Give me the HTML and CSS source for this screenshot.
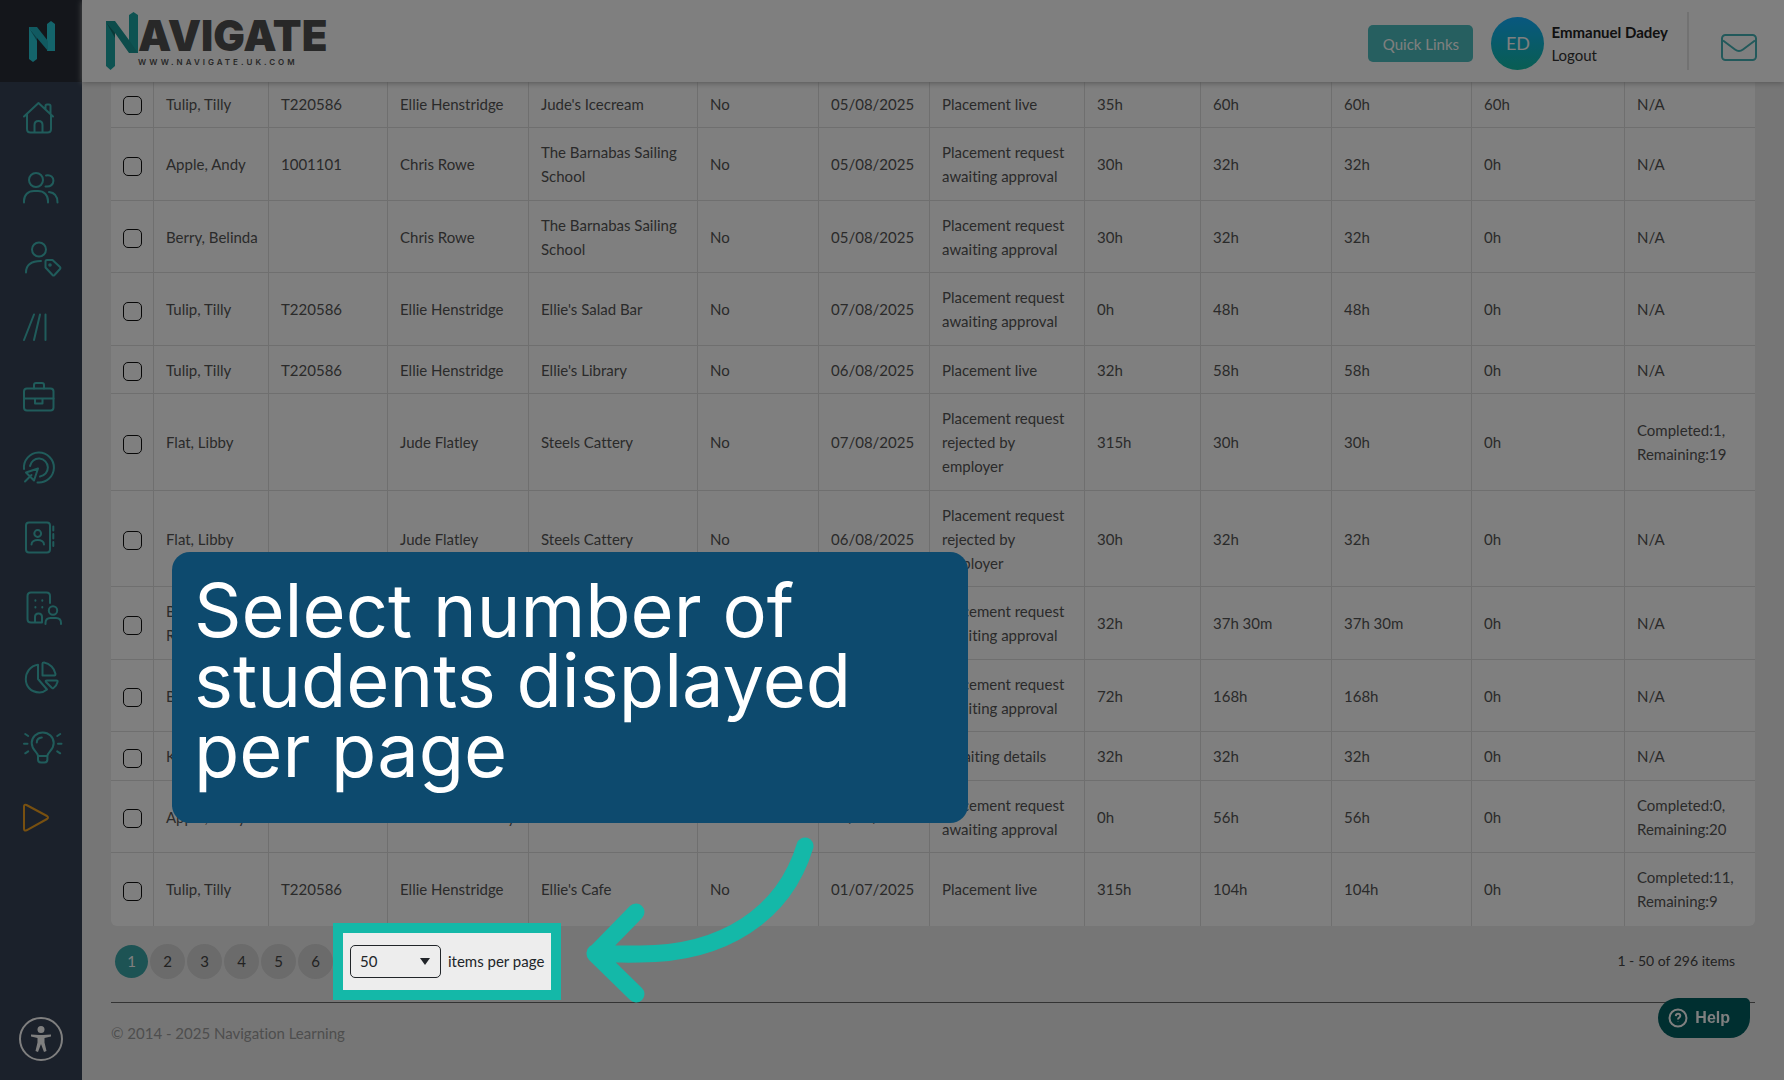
FILE: index.html
```html
<!DOCTYPE html>
<html lang="en">
<head>
<meta charset="utf-8">
<title>Navigate - Placements</title>
<link rel="stylesheet" href="styles.css">
</head>
<body>
<div class="app">
  <aside class="sidebar">
    <a class="brand" href="#" aria-label="Navigate">
      <svg width="82" height="82" viewBox="0 0 82 82"><path fill="#29c8d6" d="M29 27h8v32l-4 3-4-3zM47 24l4-3 4 3v27h-8z"/><path fill="#22b4c3" d="M29 27h8l11 14v10L37 38z"/><path fill="#197f89" d="M29 28l8 10v3z"/></svg>
    </a>
    <nav class="menu" aria-label="Main">
      <a href="#" aria-label="Home"><svg viewBox="0 0 82 70"><path d="M24 34.500L38.500 21 53 34.500M27 32.500V47q0 3.500 3.500 3.500h17q3.500 0 3.500-3.500V32.500M34.500 50.500V43q0-4 4-4t4 4v7.500M45.500 26.500V24q0-1.500 1.500-1.500h2q1.500 0 1.500 1.500v8"/></svg></a>
      <a href="#" aria-label="Users"><svg viewBox="0 0 82 70"><circle cx="36" cy="28" r="7"/><path d="M46 23.500c10-2 10 12.500-.5 11M24 50.500v-1.500c0-6 4-10 10-10h4c6 0 10 4 10 10v1.500M49 40c5 .5 8.500 4 8.500 10.500"/></svg></a>
      <a href="#" aria-label="User tags"><svg viewBox="0 0 82 70"><circle cx="39" cy="27.500" r="7"/><path d="M26 50.500c0-8 5-11.500 15-11.500M45.500 39.500q0-1.500 1.500-1.500h5.500L60 45q1 1 0 2l-5.500 6q-1 1-2 0l-7-7.500z"/><circle cx="50" cy="43" r=".8"/></svg></a>
      <a href="#" aria-label="Pathways"><svg viewBox="0 0 82 70"><path d="M34 22.500L24 48M40 22.500L34 48M45.500 22.500V48"/></svg></a>
      <a href="#" aria-label="Placements"><svg viewBox="0 0 82 70"><rect x="24" y="26.500" width="29.500" height="22" rx="3"/><path d="M34 26.500V23q0-2 2-2h6q2 0 2 2v3.500M24 36.500h29.500M35 36.500V41.500h7.500V36.500"/></svg></a>
      <a href="#" aria-label="Targets"><svg viewBox="0 0 82 70"><path d="M24 37A15 15 0 1 1 37.500 50.500M30 34A9 9 0 1 1 40 44.500M38 36.500L26 40.500 34 48.500zM31.500 43L25 49.500"/></svg></a>
      <a href="#" aria-label="Contacts"><svg viewBox="0 0 82 70"><rect x="26" y="20.500" width="24" height="30" rx="3"/><circle cx="37.700" cy="31.500" r="3.400"/><path d="M31.500 42.500c0-6 12.500-6 12.500 0M53.300 24.500v4M53.300 32v4.500M53.300 40v4"/></svg></a>
      <a href="#" aria-label="Employers"><svg viewBox="0 0 82 70"><path d="M42 50.500H31q-3.500 0-3.500-3.500V24q0-3.500 3.500-3.500h15.500q3.500 0 3.500 3.500v7M35 50.500V45q0-3.500 3.500-3.500T42 45v5.500M45.500 52v-1q0-5 5-5h5.500q5 0 5 5v1M35.400 28.300v.4M42.300 28.300v.4M35.400 35v.4M42.300 35v.4"/><circle cx="53" cy="38.500" r="4.200"/></svg></a>
      <a href="#" aria-label="Reports"><svg viewBox="0 0 82 70"><path d="M38 22.700C22 25 21 50 39.500 50.500q4 0 7.500-3L38 37zM42.500 21.500q0-1 1.500-1c6 1 10.500 6 11.500 11.500q0 1.500-1 1.500H42.500zM47 38.500h9.500q1.500 0 1 1.500-1 4-4 6-1 .8-2-.5L46 40q-1-1.500 1-1.500z"/></svg></a>
      <a href="#" aria-label="Ideas"><svg viewBox="0 0 82 70"><path d="M38 44c0-4-6.300-5.500-6.300-13a11 10.500 0 0 1 22 0c0 7.500-6.300 9-6.300 13zM38 44v3.500q0 3 3 3h3.400q3 0 3-3V44M36.800 30.500q0-4.500 5-5M24 31.700h3.500M58 31.700h3.500M25.200 22l3 2M60.200 22l-3 2M25.200 41.300l3-2M60.200 41.300l-3-2"/></svg></a>
      <a class="menu-play" href="#" aria-label="Tutorials"><svg viewBox="0 0 82 70"><path d="M24 24.500q0-2.500 2.500-1.500L47 34q2 1.500 0 3L26.500 48.300q-2.500.8-2.500-1.500z"/></svg></a>
    </nav>
    <button class="access" type="button" aria-label="Accessibility">
      <svg width="44" height="44" viewBox="0 0 44 44"><circle cx="22" cy="22" r="21" fill="none" stroke="#fff" stroke-width="2"/><circle cx="22" cy="12.500" r="3.500" fill="#fff"/><path fill="#fff" d="M12 17.500l8 .5h4l8-.5v2l-6.500 1.500v4.500L27.500 34l-2.500 1-3-8-3 8-2.500-1 2-8.500V21L12 19.500z"/></svg>
    </button>
  </aside>

  <div class="page">
    <header class="topbar">
      <a class="logo" href="#">
        <svg width="32" height="58" viewBox="0 0 32 58"><path fill="#1da7a5" d="M0 9h9v45l-4.500 4L0 54zM23 3l4.500-3L32 3v38h-9z"/><path fill="#1b9896" d="M0 9h9l14 19 9 13h-9L9 21z"/><path fill="#14716f" d="M0 10l9 11v5z"/></svg>
        <span class="logo-text"><span class="logo-name">AVIGATE</span><span class="logo-url">WWW.NAVIGATE.UK.COM</span></span>
      </a>
      <button class="quick" type="button">Quick Links</button>
      <span class="avatar">ED</span>
      <span class="user"><strong>Emmanuel Dadey</strong><a href="#">Logout</a></span>
      <a class="mail" href="#" aria-label="Messages"><svg width="36" height="28" viewBox="0 0 36 28"><rect x="1" y="1" width="34" height="25" rx="3.500"/><path d="M2 6.500l12 9q4 3 8 0l12-9"/></svg></a>
    </header>

    <main class="content">
      <table class="grid">
        <colgroup><col class="w-check"><col class="w-name"><col class="w-ref"><col class="w-tutor"><col class="w-employer"><col class="w-flag"><col class="w-date"><col class="w-status"><col class="w-planned"><col class="w-total"><col class="w-agreed"><col class="w-done"><col class="w-visits"></colgroup>
        <tbody>
          <tr><td><input type="checkbox" aria-label="Select row"></td><td>Tulip, Tilly</td><td>T220586</td><td>Ellie Henstridge</td><td>Jude's Icecream</td><td>No</td><td>05/08/2025</td><td>Placement live</td><td>35h</td><td>60h</td><td>60h</td><td>60h</td><td>N/A</td></tr>
          <tr><td><input type="checkbox" aria-label="Select row"></td><td>Apple, Andy</td><td>1001101</td><td>Chris Rowe</td><td>The Barnabas Sailing School</td><td>No</td><td>05/08/2025</td><td>Placement request awaiting approval</td><td>30h</td><td>32h</td><td>32h</td><td>0h</td><td>N/A</td></tr>
          <tr><td><input type="checkbox" aria-label="Select row"></td><td>Berry, Belinda</td><td></td><td>Chris Rowe</td><td>The Barnabas Sailing School</td><td>No</td><td>05/08/2025</td><td>Placement request awaiting approval</td><td>30h</td><td>32h</td><td>32h</td><td>0h</td><td>N/A</td></tr>
          <tr><td><input type="checkbox" aria-label="Select row"></td><td>Tulip, Tilly</td><td>T220586</td><td>Ellie Henstridge</td><td>Ellie's Salad Bar</td><td>No</td><td>07/08/2025</td><td>Placement request awaiting approval</td><td>0h</td><td>48h</td><td>48h</td><td>0h</td><td>N/A</td></tr>
          <tr><td><input type="checkbox" aria-label="Select row"></td><td>Tulip, Tilly</td><td>T220586</td><td>Ellie Henstridge</td><td>Ellie's Library</td><td>No</td><td>06/08/2025</td><td>Placement live</td><td>32h</td><td>58h</td><td>58h</td><td>0h</td><td>N/A</td></tr>
          <tr><td><input type="checkbox" aria-label="Select row"></td><td>Flat, Libby</td><td></td><td>Jude Flatley</td><td>Steels Cattery</td><td>No</td><td>07/08/2025</td><td>Placement request rejected by employer</td><td>315h</td><td>30h</td><td>30h</td><td>0h</td><td>Completed:1, Remaining:19</td></tr>
          <tr><td><input type="checkbox" aria-label="Select row"></td><td>Flat, Libby</td><td></td><td>Jude Flatley</td><td>Steels Cattery</td><td>No</td><td>06/08/2025</td><td>Placement request rejected by employer</td><td>30h</td><td>32h</td><td>32h</td><td>0h</td><td>N/A</td></tr>
          <tr><td><input type="checkbox" aria-label="Select row"></td><td>Berry,<br>Rebecca</td><td></td><td></td><td></td><td></td><td></td><td>Placement request awaiting approval</td><td>32h</td><td>37h 30m</td><td>37h 30m</td><td>0h</td><td>N/A</td></tr>
          <tr><td><input type="checkbox" aria-label="Select row"></td><td>Berry, Belinda</td><td></td><td></td><td></td><td></td><td></td><td>Placement request awaiting approval</td><td>72h</td><td>168h</td><td>168h</td><td>0h</td><td>N/A</td></tr>
          <tr><td><input type="checkbox" aria-label="Select row"></td><td>Kent, Kim</td><td></td><td></td><td></td><td></td><td></td><td>Awaiting details</td><td>32h</td><td>32h</td><td>32h</td><td>0h</td><td>N/A</td></tr>
          <tr><td><input type="checkbox" aria-label="Select row"></td><td>Apple, Andy</td><td></td><td>Emmanuel Dadey</td><td></td><td></td><td>05/08/2025</td><td>Placement request awaiting approval</td><td>0h</td><td>56h</td><td>56h</td><td>0h</td><td>Completed:0, Remaining:20</td></tr>
          <tr><td><input type="checkbox" aria-label="Select row"></td><td>Tulip, Tilly</td><td>T220586</td><td>Ellie Henstridge</td><td>Ellie's Cafe</td><td>No</td><td>01/07/2025</td><td>Placement live</td><td>315h</td><td>104h</td><td>104h</td><td>0h</td><td>Completed:11, Remaining:9</td></tr>
        </tbody>
      </table>

      <div class="pager">
        <div class="pages">
          <button class="current" type="button">1</button><button type="button">2</button><button type="button">3</button><button type="button">4</button><button type="button">5</button><button type="button">6</button>
        </div>
        <div class="per-page">
          <span class="select-box"><select id="size"><option>50</option></select></span>
          <label for="size">items per page</label>
        </div>
        <span class="range">1 - 50 of 296 items</span>
      </div>
      <footer class="footer">© 2014 - 2025 Navigation Learning</footer>
    </main>
  </div>
</div>

<button class="help" type="button"><svg width="20" height="20" viewBox="0 0 20 20"><circle cx="10" cy="10" r="8.500"/><path d="M7.800 8.200q.2-2.400 2.300-2.400t2.200 2q0 1.200-1.200 1.800-1.100.6-1.100 1.900M10 13.800v.3"/></svg>Help</button>

<div class="shade"></div>
<p class="callout">Select number of students displayed per page</p>
<svg class="arrow" width="240" height="170" viewBox="580 835 240 170" aria-hidden="true"><path d="M805 846C784 915 723 954 640 954Q617 954.500 595 953M636 912L595 954 636 994"/></svg>
</body>
</html>
```
FILE: styles.css
```css
* { box-sizing: border-box; }

body {
  margin: 0;
  background: #ededed;
  color: #555;
  font: 15px/24px Lato, "Noto Sans", sans-serif;
  font-variant-ligatures: none;
}

a { color: inherit; text-decoration: none; }
button, select, input { font: inherit; color: inherit; margin: 0; }
button { border: 0; padding: 0; }
svg { display: block; }

.app { display: flex; min-height: 100vh; }

/* Sidebar */
.sidebar {
  display: flex;
  flex-direction: column;
  flex: none;
  width: 82px;
  background: #364256;
}
.brand { background: #282d37; box-shadow: 0 0 6px #bbb; clip-path: inset(0 -6px 0 0); }
.menu a { display: block; }
.menu svg {
  width: 82px;
  height: 70px;
  fill: none;
  stroke: #40b8b6;
  stroke-width: 2;
  stroke-linecap: round;
  stroke-linejoin: round;
}
.menu .menu-play svg { stroke: #f0a020; }
.access { margin: auto auto 19px; background: none; }

/* Top bar */
.page { flex: 1; min-width: 0; }
.topbar {
  position: relative;
  display: flex;
  align-items: center;
  height: 82px;
  padding: 0 27px 0 24px;
  background: #fff;
  box-shadow: 0 1px 6px #aaa;
}
.logo { display: flex; margin-right: auto; color: #505050; }
.logo-text { display: flex; flex-direction: column; padding-top: 8px; }
.logo-name { font: 900 42px/31px Inter, sans-serif; }
.logo-url { padding: 6px 0 0; font: 600 8px/10px Inter, sans-serif; letter-spacing: 3px; }
.quick {
  width: 105px;
  height: 37px;
  margin-top: 5px;
  border-radius: 5px;
  background: #4cbec0;
  color: #fff;
}
.avatar {
  width: 53px;
  height: 53px;
  margin: 5px 7px 0 18px;
  border-radius: 50%;
  background: linear-gradient(#10b0ff, #12bca6);
  color: #fff;
  font-size: 18px;
  line-height: 53px;
  text-align: center;
}
.user { display: flex; flex-direction: column; padding-top: 6px; color: #333; }
.user strong { color: #222; font-weight: 700; line-height: 22px; }
.mail {
  margin: 0 0 0 19px;
  padding: 22px 0 8px 32px;
  border-left: 2px solid #e4e4e4;
}
.mail svg { fill: none; stroke: #45b3b6; stroke-width: 2; }

/* Table */
.content { padding: 0 29px; }
.grid {
  width: 100%;
  table-layout: fixed;
  border-spacing: 0;
  background: #fff;
  border-radius: 0 0 6px 6px;
}
.w-check { width: 43px; }
.w-name { width: 115px; }
.w-ref { width: 119px; }
.w-tutor { width: 141px; }
.w-employer { width: 169px; }
.w-flag { width: 121px; }
.w-date { width: 111px; }
.w-status { width: 155px; }
.w-planned { width: 116px; }
.w-total { width: 131px; }
.w-agreed { width: 140px; }
.w-done { width: 153px; }
.w-visits { width: 130px; }
.grid td {
  padding: 12px 11px 12px 12px;
  box-shadow: inset -1px -1px #dedede;
}
.grid td:nth-child(2) { white-space: nowrap; }
.grid td:last-child { box-shadow: inset 0 -1px #dedede; }
.grid tr:nth-child(even) td { padding-bottom: 13px; }
.grid tr:first-child td { padding-top: 10px; }
.grid tr:last-child td { box-shadow: inset -1px 0 #dedede; }
.grid tr:last-child td:last-child { box-shadow: none; }
.grid tr td:first-child { padding-right: 0; padding-bottom: 9px; }
.grid input {
  display: block;
  appearance: none;
  width: 19px;
  height: 19px;
  border: 1px solid #111;
  border-radius: 5px;
}

/* Pager */
.pager {
  display: flex;
  align-items: center;
  height: 70px;
  padding: 0 20px 0 4px;
  color: #444;
}
.pages { display: flex; align-items: center; gap: 2px; }
.pages button {
  width: 35px;
  height: 35px;
  border-radius: 50%;
  background: #d6d6d6;
}
.pages .current { width: 33px; height: 33px; background: #3ba6a8; color: #fff; }
.per-page {
  position: relative;
  z-index: 20;
  display: flex;
  align-items: center;
  gap: 7px;
  height: 77px;
  padding: 0 7px;
  border: 10px solid #14b8a8;
  background: #ededed;
  color: #212529;
}
.select-box { position: relative; }
.select-box::after {
  content: "";
  position: absolute;
  top: 13px;
  right: 11px;
  border: 5px solid transparent;
  border-top: 7px solid #212529;
  border-bottom: 0;
}
.per-page select {
  display: block;
  appearance: none;
  width: 91px;
  height: 33px;
  padding: 0 9px;
  border: 1px solid #212529;
  border-radius: 5px;
  background: none;
}
.range { margin-left: auto; font-size: 14px; }
.footer {
  margin-top: 6px;
  padding: 18px 0;
  border-top: 1px solid #666;
  color: #9c9c9c;
}

/* Floating pieces */
.help {
  position: fixed;
  right: 34px;
  bottom: 42px;
  display: flex;
  align-items: center;
  gap: 7px;
  height: 40px;
  padding: 0 20px 0 10px;
  border-radius: 20px 5px 20px 20px;
  background: #005e60;
  color: #fff;
  font: 700 16px/40px "Liberation Sans", sans-serif;
}
.help svg { fill: none; stroke: #fff; stroke-width: 2; }
.shade { position: fixed; inset: 0; z-index: 10; background: rgba(0, 0, 0, .5); }
.callout {
  position: absolute;
  z-index: 20;
  left: 172px;
  top: 552px;
  width: 796px;
  margin: 0;
  padding: 23px 90px 38px 22px;
  border-radius: 18px;
  background: #0d4a6e;
  color: #fff;
  font: 74px/70px Inter, sans-serif;
}
.arrow {
  position: absolute;
  z-index: 20;
  left: 580px;
  top: 835px;
  fill: none;
  stroke: #14b8a8;
  stroke-width: 17;
  stroke-linecap: round;
  stroke-linejoin: round;
}
```
